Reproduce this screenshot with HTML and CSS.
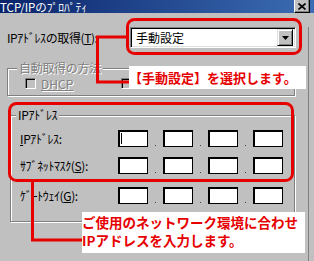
FILE: index.html
```html
<!DOCTYPE html>
<html lang="ja">
<head>
    <meta charset="utf-8">
    <title>TCP/IPのプロパティ</title>
    <link rel="stylesheet" href="styles.css">
</head>
<body>
    <div class="window">
        <div class="titlebar">
            <span class="title">TCP/IPのﾌﾟﾛﾊﾟﾃｨ</span>
            <span class="close-btn">
                <svg width="8" height="7" viewBox="0 0 8 7"><path d="M0.5 0.5 L7.5 6.5 M7.5 0.5 L0.5 6.5" stroke="#000" stroke-width="1.6"/></svg>
            </span>
        </div>

        <div class="content">
            <div class="acquire">
                <span class="acquire-label">IPｱﾄﾞﾚｽの取得(<u>T</u>):</span>
                <div class="combo">
                    <span class="combo-text">手動設定</span>
                    <span class="combo-btn">
                        <svg width="7" height="4" viewBox="0 0 7 4"><path d="M0 0 H7 L3.5 4 Z" fill="#000"/></svg>
                    </span>
                </div>
            </div>

            <fieldset class="group group-auto">
                <legend class="disabled">自動取得の方法</legend>
                <div class="checks">
                    <span class="check"><span class="check-box"></span><span class="disabled check-text">DHCP</span></span>
                    <span class="check check-manual"><span class="check-box"></span></span>
                </div>
            </fieldset>

            <fieldset class="group group-addr">
                <legend>IPｱﾄﾞﾚｽ</legend>
                <div class="ip-row">
                    <span class="ip-label"><u>I</u>Pｱﾄﾞﾚｽ:</span>
                    <div class="ip">
                        <span class="octet"><span class="caret"></span></span><span class="dot"></span>
                        <span class="octet"></span><span class="dot"></span>
                        <span class="octet"></span><span class="dot"></span>
                        <span class="octet"></span>
                    </div>
                </div>
                <div class="ip-row row-mask">
                    <span class="ip-label">ｻﾌﾞﾈｯﾄﾏｽｸ(<u>S</u>):</span>
                    <div class="ip">
                        <span class="octet"></span><span class="dot"></span>
                        <span class="octet"></span><span class="dot"></span>
                        <span class="octet"></span><span class="dot"></span>
                        <span class="octet"></span>
                    </div>
                </div>
                <div class="ip-row row-gateway">
                    <span class="ip-label">ｹﾞｰﾄｳｪｲ(<u>G</u>):</span>
                    <div class="ip">
                        <span class="octet"></span><span class="dot"></span>
                        <span class="octet"></span><span class="dot"></span>
                        <span class="octet"></span><span class="dot"></span>
                        <span class="octet"></span>
                    </div>
                </div>
            </fieldset>
        </div>

        <!-- annotation overlay -->
        <svg class="marks" width="314" height="261" viewBox="0 0 314 261">
            <rect x="127.5" y="19.5" width="173" height="34" rx="7" fill="none" stroke="#e60000" stroke-width="3"/>
            <polyline points="127,37 97.5,37 97.5,82 130,82" fill="none" stroke="#e60000" stroke-width="3"/>
            <rect x="9.5" y="103.5" width="283" height="77" rx="7" fill="none" stroke="#e60000" stroke-width="3"/>
            <polyline points="32.5,181 32.5,240 84,240" fill="none" stroke="#e60000" stroke-width="3"/>
        </svg>

        <div class="callout callout-mode">【手動設定】を選択します。</div>
        <div class="callout callout-addr">ご使用のネットワーク環境に合わせ<br>IPアドレスを入力します。</div>
    </div>
</body>
</html>
```

FILE: styles.css
```css
body {
    margin: 0;
    background: #c0c0c0;
    font-family: "Noto Sans CJK JP", sans-serif;
    font-size: 12px;
    color: #000;
}
.window {
    position: relative;
    width: 314px;
    height: 261px;
    overflow: hidden;
    background: #c0c0c0;
}

/* title bar */
.titlebar {
    display: flex;
    justify-content: space-between;
    height: 13px;
    background: linear-gradient(to right, #0a246a, #3c6db4);
    color: #fff;
}
.title {
    font-size: 11.5px;
    line-height: 12px;
    padding-top: 1px;
}
.close-btn {
    display: flex;
    align-items: center;
    justify-content: center;
    width: 14px;
    height: 12px;
    margin: -1px 4px 0 0;
    background: #c0c0c0;
    border: 1px solid;
    border-color: #fff #000 #000 #fff;
    box-shadow: inset -1px -1px #808080;
}

.content {
    width: 308px;
    height: 244px;
    border-right: 1px solid #808080;
    border-bottom: 1px solid #404040;
}

/* address mode row */
.acquire {
    display: flex;
    align-items: center;
    justify-content: space-between;
    margin: 14px 12px 0 7px;
    height: 21px;
}
.acquire-label {
    letter-spacing: -0.4px;
}
.combo {
    display: flex;
    align-items: center;
    justify-content: space-between;
    box-sizing: border-box;
    width: 166px;
    height: 21px;
    background: #fff;
    border: 1px solid;
    border-color: #808080 #fff #fff #808080;
    box-shadow: inset 1px 1px #000, inset -1px -1px #dfdfdf;
}
.combo-text {
    padding-left: 5px;
}
.combo-btn {
    display: flex;
    align-items: center;
    justify-content: center;
    box-sizing: border-box;
    width: 16px;
    height: 17px;
    margin-right: 2px;
    background: #c0c0c0;
    border: 1px solid;
    border-color: #dfdfdf #000 #000 #dfdfdf;
    box-shadow: inset 1px 1px #fff, inset -1px -1px #808080;
}

/* group boxes */
.group {
    box-sizing: border-box;
    margin: 0;
    padding: 0;
    border: 1px solid #808080;
    box-shadow: inset 1px 1px #fff, 1px 1px #fff;
}
.group legend {
    padding: 0 2px;
    margin-left: 5px;
    line-height: 12px;
    background: #c0c0c0;
    letter-spacing: -0.3px;
}
.group-auto {
    width: 288px;
    margin: 14px 0 0 7px;
    padding: 3px 0 5px 0;
}
.group-auto legend {
    margin-left: 9px;
}
.group-addr {
    width: 285px;
    margin: 13px 0 0 10px;
    padding: 9px 0 17px 0;
}
.disabled {
    color: #808080;
    text-shadow: 1px 1px #fff;
}

.checks {
    display: flex;
    align-items: center;
    height: 13px;
    padding-left: 17px;
}
.check {
    display: flex;
    align-items: center;
    gap: 5px;
}
.check-manual {
    margin-left: 48px;
}
.check-box {
    box-sizing: border-box;
    width: 11px;
    height: 11px;
    border: 1px solid;
    border-color: #808080 #fff #fff #808080;
    box-shadow: inset 1px 1px #000;
    background: #c0c0c0;
}
.check-text {
    text-decoration: underline;
    text-decoration-color: #808080;
}

/* ip address rows */
.ip-row {
    display: flex;
    align-items: center;
    height: 17px;
    padding-left: 9px;
}
.row-mask {
    margin-top: 10px;
}
.row-gateway {
    margin-top: 13px;
}
.ip-label {
    width: 98px;
    letter-spacing: -0.4px;
}
.ip {
    display: flex;
    align-items: stretch;
    height: 17px;
}
.octet {
    position: relative;
    box-sizing: border-box;
    width: 30px;
    background: #fff;
    border: 1px solid #000;
    border-left-width: 2px;
    border-top-width: 2px;
}
.caret {
    position: absolute;
    left: 1px;
    top: 1px;
    width: 1px;
    height: 11px;
    background: #000;
}
.dot {
    position: relative;
    width: 15px;
}
.dot::after {
    content: "";
    position: absolute;
    left: 7px;
    bottom: 1px;
    width: 1px;
    height: 1px;
    background: #404040;
}

/* annotations */
.marks {
    position: absolute;
    left: 0;
    top: 0;
}
.callout {
    position: absolute;
    background: #fff;
    color: #e60000;
    font-weight: bold;
    white-space: nowrap;
}
.callout-mode {
    left: 129px;
    top: 66px;
    width: 177px;
    height: 23px;
    font-size: 13px;
    line-height: 23px;
}
.callout-addr {
    left: 82px;
    top: 212px;
    width: 223px;
    height: 41px;
    padding-top: 1px;
    box-sizing: border-box;
    font-size: 13.5px;
    line-height: 18px;
}
```
